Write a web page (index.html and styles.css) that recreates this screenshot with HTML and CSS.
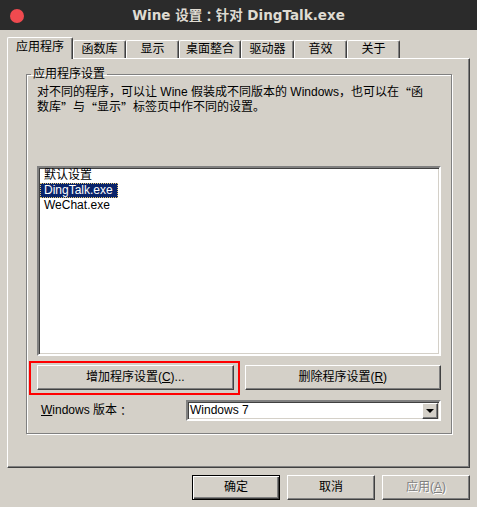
FILE: index.html
```html
<!DOCTYPE html>
<html>
<head>
    <meta charset="UTF-8">
    <title>Wine 设置</title>
    <link rel="stylesheet" href="styles.css">
</head>
<body>
    <div class="titlebar">
        <span class="close"></span>
        <span class="title">Wine 设置<span class="colon">：</span>针对 DingTalk.exe</span>
    </div>
    <div class="dialog">
        <ul class="tabs">
            <li class="tab active">应用程序</li>
            <li class="tab">函数库</li>
            <li class="tab">显示</li>
            <li class="tab">桌面整合</li>
            <li class="tab">驱动器</li>
            <li class="tab">音效</li>
            <li class="tab">关于</li>
        </ul>
        <div class="panel">
            <fieldset class="group">
                <legend>应用程序设置</legend>
                <p class="desc">对不同的程序，可以让 Wine 假装成不同版本的 Windows，也可以在<span class="cjk">“</span>函<br>数库<span class="cjk">”</span>与<span class="cjk">“</span>显示<span class="cjk">”</span>标签页中作不同的设置。</p>
                <ul class="list">
                    <li>默认设置</li>
                    <li class="selected">DingTalk.exe</li>
                    <li>WeChat.exe</li>
                </ul>
                <div class="btn-row">
                    <button class="btn add">增加程序设置(<u>C</u>)...</button>
                    <button class="btn">删除程序设置(<u>R</u>)</button>
                </div>
                <div class="ver-row">
                    <label><u>W</u>indows 版本<span class="colon">：</span></label>
                    <div class="combo">
                        <span class="value">Windows 7</span>
                        <span class="drop"></span>
                    </div>
                </div>
            </fieldset>
        </div>
        <div class="footer">
            <button class="btn default">确定</button>
            <button class="btn">取消</button>
            <button class="btn disabled">应用(<u>A</u>)</button>
        </div>
    </div>
</body>
</html>
```

FILE: styles.css
```css
* {
    margin: 0;
    padding: 0;
    list-style: none;
    box-sizing: border-box;
}
body {
    width: 477px;
    height: 507px;
    background-color: #d4d0c8;
    font: 12px/15px "Liberation Sans", "Noto Sans CJK SC", sans-serif;
    color: #000;
    overflow: hidden;
}
.cjk,
.colon {
    font-family: "Noto Sans CJK SC", sans-serif;
    vertical-align: top;
}
.colon {
    font-family: "Noto Sans CJK TC", sans-serif;
}
.titlebar {
    height: 30px;
    background-color: #2b2b2b;
    display: flex;
    align-items: center;
    justify-content: center;
    position: relative;
}
.close {
    position: absolute;
    left: 10px;
    top: 9px;
    width: 14px;
    height: 14px;
    border-radius: 50%;
    background-color: #ef4a4f;
}
.title {
    color: #dfdbd2;
    font: bold 13.5px/18px "DejaVu Sans", "Noto Sans CJK SC", sans-serif;
}
.dialog {
    padding: 7px 7px 0 7px;
}
.tabs {
    display: flex;
    align-items: flex-end;
    height: 21px;
}
.tab {
    min-width: 53px;
    height: 18px;
    padding: 0 6px;
    text-align: center;
    line-height: 16px;
    border: 1px solid #fff;
    border-right-color: #404040;
    border-bottom: none;
    border-radius: 2px 2px 0 0;
    box-shadow: inset -1px 0 #808080;
}
.tab.active {
    height: 22px;
    padding: 0 8px;
    line-height: 19px;
    position: relative;
    z-index: 1;
    background-color: #d4d0c8;
    margin-bottom: -1px;
}
.panel {
    height: 410px;
    padding: 8px 17px 0 18px;
    border: 1px solid #fff;
    border-right-color: #404040;
    border-bottom-color: #404040;
    box-shadow: inset -1px -1px #808080;
}
.group {
    border: 1px solid #808080;
    box-shadow: inset 1px 1px #fff, 1px 1px #fff;
    padding: 0 10px 12px 10px;
    min-width: 0;
}
.group legend {
    margin-left: -6px;
    padding: 0 2px;
}
.desc {
    margin-top: 3px;
    height: 30px;
    white-space: nowrap;
}
.list {
    margin-top: 51px;
    height: 190px;
    background-color: #fff;
    border: 2px solid;
    border-color: #808080 #fff #fff #808080;
    box-shadow: inset 1px 1px #404040, inset -1px -1px #d4d0c8;
    padding: 0 0 0 1px;
}
.list li {
    width: fit-content;
    padding: 0 5px 0 4px;
    line-height: 15px;
}
.list .selected {
    background-color: #0a246a;
    color: #fff;
    outline: 1px dotted #e8c870;
    outline-offset: -1px;
}
.btn-row {
    display: flex;
    gap: 11px;
    margin-top: 9px;
}
.btn {
    font: inherit;
    color: #000;
    height: 25px;
    background-color: #d4d0c8;
    border: 1px solid;
    border-color: #fff #404040 #404040 #fff;
    box-shadow: inset -1px -1px #808080;
}
.btn-row .btn {
    flex: 1;
}
.add {
    position: relative;
}
.add::after {
    content: "";
    position: absolute;
    left: -9px;
    right: -7px;
    top: -5px;
    bottom: -6px;
    border: 2px solid #f00;
}
.ver-row {
    display: flex;
    align-items: center;
    margin-top: 10px;
}
.ver-row label {
    width: 149px;
    padding-left: 4px;
}
.combo {
    flex: 1;
    height: 21px;
    display: flex;
    align-items: center;
    background-color: #fff;
    border: 2px solid;
    border-color: #808080 #fff #fff #808080;
    box-shadow: inset 1px 1px #404040, inset -1px -1px #d4d0c8;
    padding: 0 1px 0 2px;
}
.value {
    flex: 1;
}
.drop {
    width: 16px;
    height: 16px;
    background-color: #d4d0c8;
    border: 1px solid;
    border-color: #fff #404040 #404040 #fff;
    box-shadow: inset -1px -1px #808080;
    display: flex;
    align-items: center;
    justify-content: center;
}
.drop::before {
    content: "";
    border-left: 4px solid transparent;
    border-right: 4px solid transparent;
    border-top: 4px solid #000;
    margin-top: 1px;
}
.footer {
    display: flex;
    justify-content: flex-end;
    gap: 7px;
    margin-top: 7px;
}
.footer .btn {
    width: 88px;
}
.footer .default {
    border-color: #000;
    box-shadow: inset 1px 1px #fff, inset -1px -1px #404040, inset -2px -2px #808080;
}
.footer .disabled {
    color: #808080;
    text-shadow: 1px 1px #fff;
}
```
